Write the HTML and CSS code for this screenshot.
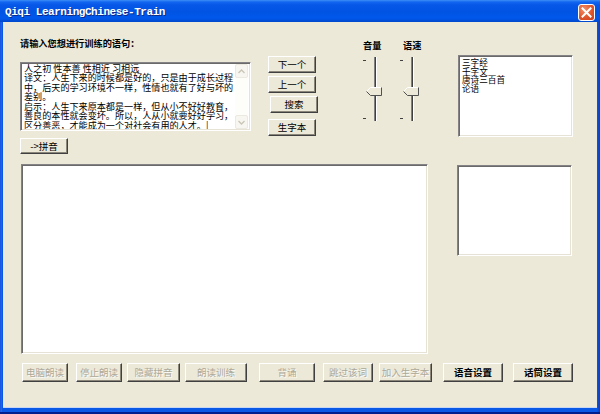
FILE: index.html
```html
<!DOCTYPE html>
<html lang="zh-CN">
<head>
<meta charset="utf-8">
<title>Qiqi LearningChinese-Train</title>
<link rel="stylesheet" href="styles.css">
</head>
<body>
<div class="window">
  <div class="titlebar">
    <span class="title">Qiqi LearningChinese-Train</span>
    <span class="close">
      <svg width="11" height="11" viewBox="0 0 11 11"><path d="M1.5 1.5 L9.5 9.5 M9.5 1.5 L1.5 9.5" stroke="#fff" stroke-width="2" stroke-linecap="square"/></svg>
    </span>
  </div>
  <div class="client">
    <div class="top">
      <div class="leftcol">
        <div class="prompt">请输入您想进行训练的语句：</div>
        <div class="editbox sunken">
          <div class="edittext"><div>人之初 性本善 性相近 习相远</div><div>译文：人生下来的时候都是好的，只是由于成长过程</div><div>中，后天的学习环境不一样，性情也就有了好与坏的</div><div>差别。</div><div>启示：人生下来原本都是一样，但从小不好好教育，</div><div>善良的本性就会变坏。所以，人从小就要好好学习，</div><div>区分善恶，才能成为一个对社会有用的人才。|</div></div>
          <div class="vscroll">
            <div class="sbtn"><svg width="7" height="5" viewBox="0 0 7 5"><path d="M0.5 4 L3.5 1 L6.5 4" fill="none" stroke="#c9c6b6" stroke-width="1.3"/></svg></div>
            <div class="sbtn"><svg width="7" height="5" viewBox="0 0 7 5"><path d="M0.5 1 L3.5 4 L6.5 1" fill="none" stroke="#c9c6b6" stroke-width="1.3"/></svg></div>
          </div>
        </div>
        <button class="btn pinyin">-&gt;拼音</button>
      </div>
      <div class="btncol">
        <button class="btn">下一个</button>
        <button class="btn">上一个</button>
        <button class="btn search">搜索</button>
        <button class="btn newword">生字本</button>
      </div>
      <div class="sliders">
        <div class="slider">
          <div class="slabel">音量</div>
          <div class="sbody">
            <div class="ticks"><i></i><i></i></div>
            <div class="track"></div>
            <svg class="thumb" width="16" height="9" viewBox="0 0 16 9"><path d="M0.5 4.5 L4.5 0.5 L15.5 0.5 L15.5 8.5 L4.5 8.5 Z" fill="#ece9d8"/><path d="M0.5 4.5 L4.5 0.5 L15 0.5" fill="none" stroke="#fff"/><path d="M15.5 0.5 L15.5 8.5 L4.5 8.5 L0.5 4.5" fill="none" stroke="#505050"/></svg>
          </div>
        </div>
        <div class="slider">
          <div class="slabel">语速</div>
          <div class="sbody">
            <div class="ticks"><i></i><i></i></div>
            <div class="track"></div>
            <svg class="thumb" width="16" height="9" viewBox="0 0 16 9"><path d="M0.5 4.5 L4.5 0.5 L15.5 0.5 L15.5 8.5 L4.5 8.5 Z" fill="#ece9d8"/><path d="M0.5 4.5 L4.5 0.5 L15 0.5" fill="none" stroke="#fff"/><path d="M15.5 0.5 L15.5 8.5 L4.5 8.5 L0.5 4.5" fill="none" stroke="#505050"/></svg>
          </div>
        </div>
      </div>
      <ul class="listbox sunken">
        <li>三字经</li>
        <li>千字文</li>
        <li>唐诗三百首</li>
        <li>论语</li>
      </ul>
    </div>
    <div class="middle">
      <div class="bigbox sunken"></div>
      <div class="smallbox sunken"></div>
    </div>
    <div class="bottom">
      <button class="btn disabled">电脑朗读</button>
      <button class="btn disabled">停止朗读</button>
      <button class="btn disabled">隐藏拼音</button>
      <button class="btn disabled">朗读训练</button>
      <button class="btn disabled">背诵</button>
      <button class="btn disabled">跳过该词</button>
      <button class="btn disabled">加入生字本</button>
      <button class="btn strong">语音设置</button>
      <button class="btn strong">话筒设置</button>
    </div>
  </div>
</div>
</body>
</html>
```
FILE: styles.css
```css
* { box-sizing: border-box; }
html, body { margin: 0; padding: 0; }
body {
  width: 600px;
  height: 414px;
  overflow: hidden;
  font-family: "Noto Sans CJK SC", "Noto Sans", sans-serif;
  font-size: 9.2px;
  color: #000;
}
.window {
  width: 600px;
  height: 414px;
  display: flex;
  flex-direction: column;
  background: linear-gradient(to right, #0a3fcf 0, #2a74f0 1px, #0a58e6 2px, #0a58e6 597px, #0a44c8 599px);
  border-bottom: 2px solid #001f8f;
}
.titlebar {
  height: 22px;
  flex: none;
  display: flex;
  align-items: center;
  justify-content: space-between;
  padding: 0 5px 0 5px;
  background: linear-gradient(to bottom, #3d8ef7 0, #1266ef 2px, #0757e8 5px, #0054e3 12px, #0058ec 18px, #0048cc 22px);
}
.title {
  font-family: "Liberation Mono", monospace;
  font-weight: bold;
  font-size: 11px;
  letter-spacing: -0.45px;
  color: #fff;
  text-shadow: 1px 1px 0 #0b2a8a;
  line-height: 12px;
  margin-top: 1px;
}
.close {
  width: 17px;
  height: 17px;
  margin-top: 2px;
  border: 1px solid #fff;
  border-radius: 3px;
  background: radial-gradient(circle at 35% 30%, #f0906a 0, #e0552a 55%, #c8401c 100%);
  display: flex;
  align-items: center;
  justify-content: center;
}
.client {
  flex: 1;
  margin: 0 3px 5px 3px;
  background: #ece9d8;
  padding: 15px 0 0 17px;
  box-shadow: 0 1px 0 #c8d6f4;
}
.top {
  display: flex;
  align-items: flex-start;
}
.leftcol {
  width: 231px;
  display: flex;
  flex-direction: column;
  align-items: flex-start;
}
.prompt {
  line-height: 12px;
  font-weight: bold;
}
.sunken {
  background: #fff;
  border: 1px solid;
  border-color: #848284 #fff #fff #848284;
  box-shadow: inset 1px 1px 0 #6a6a6a, inset -1px -1px 0 #e6e3d6;
}
.editbox {
  margin-top: 13px;
  width: 231px;
  height: 69px;
  display: flex;
  padding: 1px 2px 1px 2px;
}
.edittext {
  flex: 1;
  font-size: 9.1px;
  white-space: nowrap;
  overflow: hidden;
  padding-left: 1px;
}
.edittext div {
  height: 9.45px;
  line-height: 9.45px;
}
.vscroll {
  width: 13px;
  display: flex;
  flex-direction: column;
  justify-content: space-between;
  background: #fdfdfa;
}
.sbtn {
  height: 14px;
  border: 1px solid #ebe9e0;
  border-radius: 2px;
  background: #f7f6f0;
  display: flex;
  align-items: center;
  justify-content: center;
}
.btn {
  font-family: "Noto Sans CJK SC", "Noto Sans", sans-serif;
  font-size: 9.5px;
  color: #000;
  background: #ece9d8;
  border: 1px solid;
  border-color: #fff #404040 #404040 #fff;
  box-shadow: inset -1px -1px 0 #8a877a;
  padding: 0;
  margin: 0;
  height: 17px;
  line-height: 13px;
  text-align: center;
}
.pinyin {
  margin-top: 7px;
  width: 48px;
  height: 16px;
}
.btncol {
  margin-left: 17px;
  margin-top: 19px;
  width: 50px;
  display: flex;
  flex-direction: column;
  align-items: flex-start;
}
.btncol .btn {
  width: 48px;
  margin-bottom: 3px;
}
.btncol .search { margin-left: 2px; }
.btncol .newword { margin-top: 3px; }
.sliders {
  margin-left: 42px;
  margin-top: 2px;
  display: flex;
}
.slider {
  width: 38px;
}
.slabel {
  line-height: 12px;
  font-weight: bold;
  padding-left: 3px;
}
.slider + .slider .slabel { padding-left: 5px; }
.sbody {
  position: relative;
  margin-top: 6px;
  height: 64px;
  display: flex;
  padding-left: 3px;
}
.slider + .slider .sbody { padding-left: 2px; }
.ticks {
  width: 3px;
  height: 64px;
  padding: 3px 0 2px 0;
  display: flex;
  flex-direction: column;
  justify-content: space-between;
}
.ticks i {
  display: block;
  width: 3px;
  height: 1px;
  background: #404040;
}
.track {
  margin-left: 8px;
  width: 3px;
  height: 64px;
  border-left: 1px solid #808080;
  border-right: 1px solid #fff;
  background: #404040;
}
.thumb {
  position: absolute;
  left: 6px;
  top: 30px;
}
.slider + .slider .thumb { left: 5px; }
.listbox {
  list-style: none;
  margin: 18px 0 0 22px;
  width: 115px;
  height: 82px;
  padding: 2px 3px;
  font-size: 8.6px;
}
.listbox li {
  margin: 0;
  padding: 0;
  height: 8.5px;
  line-height: 8.5px;
}
.middle {
  margin-top: 10px;
  display: flex;
  align-items: flex-start;
}
.bigbox {
  margin-left: 1px;
  width: 407px;
  height: 190px;
}
.smallbox {
  margin-left: 29px;
  margin-top: 1px;
  width: 115px;
  height: 91px;
}
.bottom {
  margin-top: 9px;
  display: flex;
}
.bottom .btn { height: 19px; line-height: 15px; }
.bottom .btn:nth-child(1) { margin-left: 2px; width: 46px; }
.bottom .btn:nth-child(2) { margin-left: 8px; width: 46px; }
.bottom .btn:nth-child(3) { margin-left: 5px; width: 53px; }
.bottom .btn:nth-child(4) { margin-left: 5px; width: 62px; }
.bottom .btn:nth-child(5) { margin-left: 12px; width: 56px; }
.bottom .btn:nth-child(6) { margin-left: 8px; width: 50px; }
.bottom .btn:nth-child(7) { margin-left: 6px; width: 53px; }
.bottom .btn:nth-child(8) { margin-left: 11px; width: 60px; }
.bottom .btn:nth-child(9) { margin-left: 10px; width: 60px; }
.disabled {
  color: #aca899;
  text-shadow: 1px 1px 0 #fbfaf5;
}
.strong { font-weight: bold; }
```
